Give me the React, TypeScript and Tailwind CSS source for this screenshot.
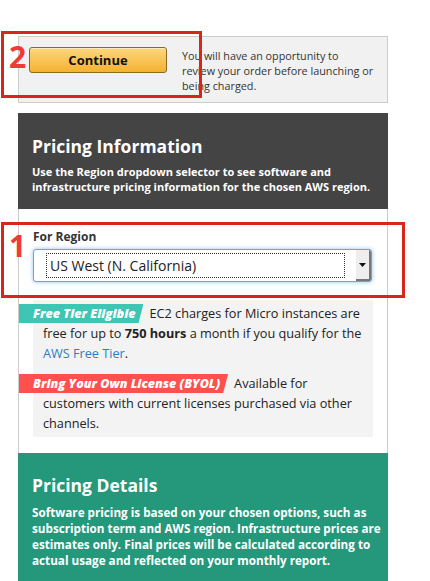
const FONT = "font-['Open_Sans','Noto_Sans',sans-serif]";

function Callout({ n, className, numClass }: { n: string; className: string; numClass: string }) {
  return (
    <div className={`absolute border-[3px] border-[#d9261c] pointer-events-none ${className}`}>
      <span className={`absolute font-bold text-[#ef3b36] text-[30px] leading-none ${numClass}`}>{n}</span>
    </div>
  );
}

function Badge({ children, color }: { children: string; color: string }) {
  return (
    <span
      className={`inline-block ml-[-24px] mr-[6px] h-[19px] pl-[14px] pr-[8px] ${color} text-white font-extrabold italic text-[12.5px] leading-[19px] [clip-path:polygon(0_0,100%_0,calc(100%-5px)_100%,0_100%)]`}
    >
      {children}
    </span>
  );
}

export default function App() {
  return (
    <div className={`relative w-[430px] h-[581px] bg-white overflow-hidden ${FONT}`}>
      <div className="ml-[18px] w-[370px] pt-[36px]">
        {/* continue box */}
        <div className="flex border border-[#cccccc] bg-[#f1f1f1] h-[67px] pl-[10px] pt-[10px]">
          <button className="w-[138px] h-[26px] rounded-[3px] border border-[#8a6a1c] bg-[linear-gradient(#fcd77f,#f5b230)] text-[13px] font-bold text-[#111] leading-none shadow-[inset_0_1px_0_rgba(255,255,255,0.5)]">
            Continue
          </button>
          <p className="ml-[15px] w-[200px] text-[10.8px] leading-[15px] text-[#333] pt-[1px]">
            You will have an opportunity to
            <br />
            review your order before launching or
            <br />
            being charged.
          </p>
        </div>

        {/* pricing information */}
        <div className="mt-[10px] border-x border-[#cccccc]">
          <div className="bg-[#444444] text-white px-[14px] pt-[21px] h-[96px] -mx-px">
            <h2 className="text-[17.5px] font-bold leading-[24px]">Pricing Information</h2>
            <p className="mt-[6px] text-[11px] font-bold leading-[15px]">
              Use the Region dropdown selector to see software and infrastructure pricing information for the chosen AWS region.
            </p>
          </div>

          <div className="px-[14px] pt-[20px] pb-[16px]">
            <div className="text-[12px] font-bold text-[#333] leading-[16px]">For Region</div>
            <div className="mt-[4px] flex h-[33px] w-[339px] rounded-[3px] border border-[#6aa5e0] bg-white shadow-[0_0_4px_rgba(80,150,230,0.6)] overflow-hidden">
              <div className="flex-1 flex items-center pl-[12px] pr-[11px]">
                <div className="w-full h-[25px] border border-dotted border-[#333] flex items-center pl-[3px] text-[14px] text-[#222]">
                  US West (N. California)
                </div>
              </div>
              <div className="w-[15px] bg-[#eeeeee] border-r-2 border-b-2 border-[#777] flex items-center justify-center">
                <svg width="7" height="4" viewBox="0 0 7 4"><path d="M0 0h7L3.5 4z" fill="#111" /></svg>
              </div>
            </div>

            <div className="mt-[18px] w-[340px] bg-[#f3f3f3] pl-[10px] pr-[4px] pt-[3px] pb-[4px] text-[12.7px] leading-[20px] text-[#222]">
              <p>
                <Badge color="bg-[#3ec5b4]">Free Tier Eligible</Badge>
                EC2 charges for Micro instances are free for up to <b>750 hours</b> a month if you qualify for the{" "}
                <a className="text-[#2f7cc2]">AWS Free Tier</a>.
              </p>
              <p className="mt-[10px]">
                <Badge color="bg-[#ff5050]">Bring Your Own License (BYOL)</Badge>
                Available for customers with current licenses purchased via other channels.
              </p>
            </div>
          </div>

          <div className="bg-[#25977a] text-white pl-[14px] pr-[6px] pt-[20px] h-[140px] -mx-px">
            <h2 className="text-[17.5px] font-bold leading-[24px]">Pricing Details</h2>
            <p className="mt-[7px] text-[11.7px] font-bold leading-[16px]">
              Software pricing is based on your chosen options, such as subscription term and AWS region. Infrastructure prices are estimates only. Final prices will be calculated according to actual usage and reflected on your monthly report.
            </p>
          </div>
        </div>
      </div>

      <Callout n="2" className="left-[1px] top-[31px] w-[201px] h-[67px]" numClass="left-[5px] top-[8px]" />
      <Callout n="1" className="left-[1px] top-[222px] w-[404px] h-[76px]" numClass="left-[5px] top-[6px]" />
    </div>
  );
}
